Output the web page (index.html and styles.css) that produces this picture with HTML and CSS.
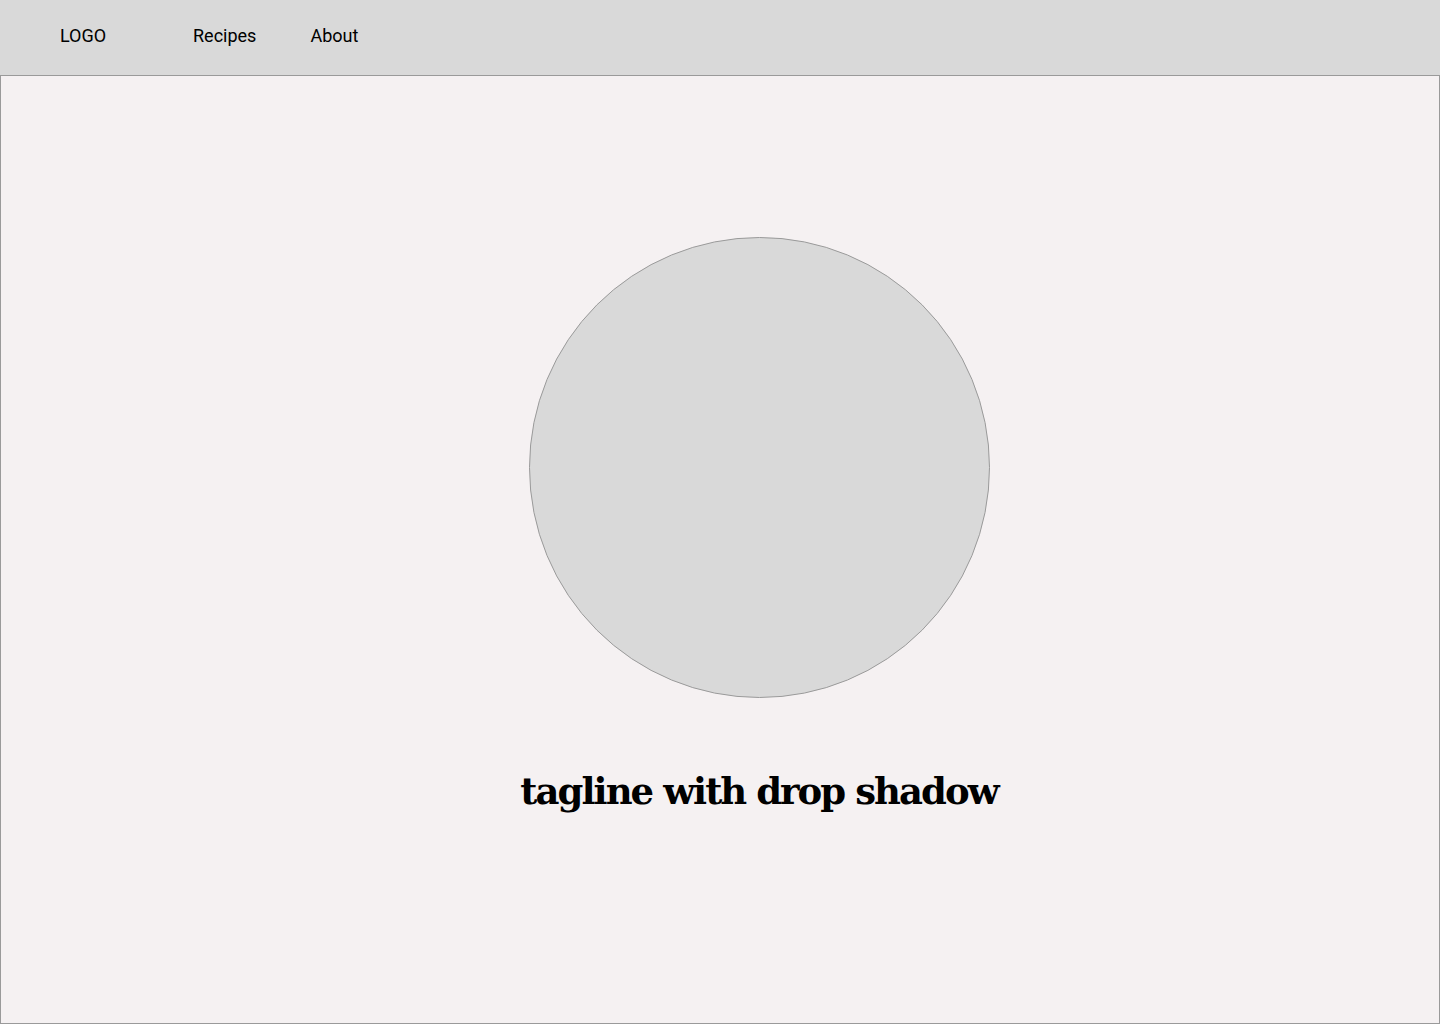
FILE: index.html
```html
<!DOCTYPE html>
<html lang="en">
<head>
<meta charset="utf-8">
<title>Recipes</title>
<link rel="stylesheet" href="styles.css">
</head>
<body>
<header class="topbar">
  <div class="logo">LOGO</div>
  <nav class="nav">
    <a class="nav-link" href="#">Recipes</a>
    <a class="nav-link" href="#">About</a>
  </nav>
</header>
<main class="hero">
  <div class="hero-image"></div>
  <h1 class="tagline">tagline with drop shadow</h1>
</main>
</body>
</html>
```
FILE: styles.css
```css
* { box-sizing: border-box; }
html, body { margin: 0; padding: 0; }
body {
  width: 1440px;
  height: 1024px;
  font-family: Roboto, "Liberation Sans", sans-serif;
  color: #000;
  background: #f5f1f2;
  display: flex;
  flex-direction: column;
}
.topbar {
  height: 75px;
  background: #d9d9d9;
  display: flex;
  align-items: center;
  padding-left: 60px;
  padding-bottom: 5px;
}
.logo {
  font-size: 18px;
  width: 133px;
}
.nav {
  display: flex;
  gap: 54px;
}
.nav-link {
  font-size: 18px;
  color: #000;
  text-decoration: none;
}
.hero {
  flex: 1;
  border: 1px solid #9a9a9a;
  background: #f5f1f2;
  display: flex;
  flex-direction: column;
  align-items: center;
  padding-top: 161px;
  padding-left: 78px;
}
.hero-image {
  width: 461px;
  height: 461px;
  border-radius: 50%;
  background: #d9d9d9;
  border: 1px solid #9a9a9a;
}
.tagline {
  margin: 68px 0 0;
  font-family: "DejaVu Serif", "Liberation Serif", serif;
  font-weight: bold;
  font-size: 37px;
  letter-spacing: -1.95px;
  line-height: 50px;
}
```
